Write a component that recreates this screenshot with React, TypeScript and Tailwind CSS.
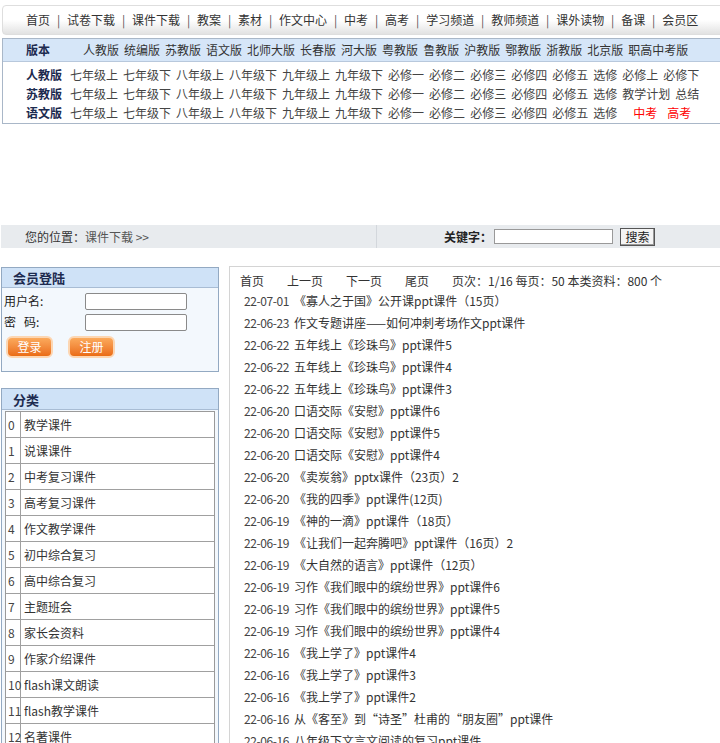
import React from 'react';

const NAV = ['首页', '试卷下载', '课件下载', '教案', '素材', '作文中心', '中考', '高考', '学习频道', '教师频道', '课外读物', '备课', '会员区'];

const VERSIONS = ['人教版', '统编版', '苏教版', '语文版', '北师大版', '长春版', '河大版', '粤教版', '鲁教版', '沪教版', '鄂教版', '浙教版', '北京版', '职高中考版'];

const GRADES = ['七年级上', '七年级下', '八年级上', '八年级下', '九年级上', '九年级下', '必修一', '必修二', '必修三', '必修四', '必修五', '选修'];

const ROWS = [
  { label: '人教版', extra: ['必修上', '必修下'], red: false },
  { label: '苏教版', extra: ['教学计划', '总结'], red: false },
  { label: '语文版', extra: ['中考', '高考'], red: true },
];

const CATEGORIES = ['教学课件', '说课课件', '中考复习课件', '高考复习课件', '作文教学课件', '初中综合复习', '高中综合复习', '主题班会', '家长会资料', '作家介绍课件', 'flash课文朗读', 'flash教学课件', '名著课件', '诗词鉴赏'];

const ITEMS: [string, string][] = [
  ['22-07-01', '《寡人之于国》公开课ppt课件（15页）'],
  ['22-06-23', '作文专题讲座——如何冲刺考场作文ppt课件'],
  ['22-06-22', '五年线上《珍珠鸟》ppt课件5'],
  ['22-06-22', '五年线上《珍珠鸟》ppt课件4'],
  ['22-06-22', '五年线上《珍珠鸟》ppt课件3'],
  ['22-06-20', '口语交际《安慰》ppt课件6'],
  ['22-06-20', '口语交际《安慰》ppt课件5'],
  ['22-06-20', '口语交际《安慰》ppt课件4'],
  ['22-06-20', '《卖炭翁》pptx课件（23页）2'],
  ['22-06-20', '《我的四季》ppt课件(12页)'],
  ['22-06-19', '《神的一滴》ppt课件（18页）'],
  ['22-06-19', '《让我们一起奔腾吧》ppt课件（16页）2'],
  ['22-06-19', '《大自然的语言》ppt课件（12页）'],
  ['22-06-19', '习作《我们眼中的缤纷世界》ppt课件6'],
  ['22-06-19', '习作《我们眼中的缤纷世界》ppt课件5'],
  ['22-06-19', '习作《我们眼中的缤纷世界》ppt课件4'],
  ['22-06-16', '《我上学了》ppt课件4'],
  ['22-06-16', '《我上学了》ppt课件3'],
  ['22-06-16', '《我上学了》ppt课件2'],
  ['22-06-16', '从《客至》到“诗圣”杜甫的“朋友圈”ppt课件'],
  ['22-06-16', '八年级下文言文阅读的复习ppt课件'],
  ['22-06-16', '《小石潭记》ppt课件'],
];

const OrangeButton: React.FC<{ label: string }> = ({ label }) => (
  <span className="inline-flex h-[22px] w-[47px] items-center justify-center rounded-[6px] border-2 border-[#fcd6b2] bg-gradient-to-b from-[#fbaa5c] to-[#ea6c12] text-[12px] text-white">
    {label}
  </span>
);

export default function App() {
  return (
    <div className="h-[743px] w-[720px] overflow-hidden bg-white font-['Noto_Sans_CJK_SC',sans-serif] text-[12px] text-[#333]">
      <div className="w-[960px] pl-[2px] pt-[5px]">
        {/* top nav */}
        <div className="flex h-[30px] items-center rounded-[4px] border border-[#dedede] bg-gradient-to-b from-white via-white to-[#e2e2e2] pl-[23px] leading-none">
          {NAV.map((n, i) => (
            <React.Fragment key={n}>
              {i > 0 && <span className="w-[17px] text-center text-[#555]">|</span>}
              <span>{n}</span>
            </React.Fragment>
          ))}
        </div>

        {/* version table */}
        <div className="mt-[3px] border border-[#a9b7c8] leading-none">
          <div className="flex h-[23px] items-center border-b border-[#b8c8dc] bg-[#d6e6f8] pl-[23px]">
            <span className="w-[57px] font-bold text-[#1d2b50]">版本</span>
            <div className="flex gap-[5px] text-[#333]">
              {VERSIONS.map((v) => (
                <span key={v}>{v}</span>
              ))}
            </div>
          </div>
          <div className="pb-[1px] pt-[3px]">
            {ROWS.map((r) => (
              <div key={r.label} className="flex h-[19px] items-center pl-[23px]">
                <span className="w-[44px] font-bold text-[#1d2b50]">{r.label}</span>
                <div className="flex gap-[5px] text-[#444]">
                  {GRADES.map((g) => (
                    <span key={g}>{g}</span>
                  ))}
                  {r.red ? (
                    <span className="ml-[11px] flex gap-[10px] text-[#f00]">
                      {r.extra.map((e) => (
                        <span key={e}>{e}</span>
                      ))}
                    </span>
                  ) : (
                    r.extra.map((e) => <span key={e}>{e}</span>)
                  )}
                </div>
              </div>
            ))}
          </div>
        </div>

        {/* location bar */}
        <div className="ml-[-1px] mt-[101px] flex h-[23px] items-center bg-[#e8ebee] leading-none">
          <div className="flex h-full w-[376px] items-center border-r border-[#d3d7dc] pl-[24px]">
            <span className="text-[#333]">您的位置：</span>
            <span className="text-[#555]">课件下载 &gt;&gt;</span>
          </div>
          <div className="flex items-center pl-[67px]">
            <span className="font-bold text-[#222]">关键字：</span>
            <input className="ml-[2px] h-[15px] w-[119px] border border-[#999] bg-white" />
            <span className="ml-[7px] flex h-[18px] w-[35px] items-center justify-center border border-[#555] bg-[#f4f4f4] text-[#222] shadow-[inset_-1px_-1px_0_#999]">
              搜索
            </span>
          </div>
        </div>

        {/* main */}
        <div className="ml-[-1px] mt-[18px] flex gap-[10px] leading-none">
          {/* left column */}
          <div className="w-[218px] shrink-0">
            <div className="mt-[1px] border border-[#93a9c2] bg-[#f3f8fd]">
              <div className="flex h-[20px] items-center border-b border-[#a8bcd4] bg-[#cfe2f7] pl-[11px] text-[13px] font-bold text-[#1d2b50]">
                会员登陆
              </div>
              <div className="h-[83px] pt-[4px]">
                <div className="flex h-[18px] items-center pl-[2px]">
                  <span className="w-[81px] text-[#222]">用户名:</span>
                  <input className="h-[17px] w-[102px] rounded-[2px] border border-[#8a8a8a] bg-white" />
                </div>
                <div className="mt-[3px] flex h-[18px] items-center pl-[2px]">
                  <span className="w-[81px] text-[#222]">密&nbsp;&nbsp;&nbsp;码:</span>
                  <input className="h-[17px] w-[102px] rounded-[2px] border border-[#8a8a8a] bg-white" />
                </div>
                <div className="mt-[5px] flex gap-[15px] pl-[4px]">
                  <OrangeButton label="登录" />
                  <OrangeButton label="注册" />
                </div>
              </div>
            </div>

            <div className="mt-[16px] border border-[#93a9c2] bg-[#f3f8fd]">
              <div className="flex h-[21px] items-center border-b border-[#a8bcd4] bg-[#cfe2f7] pl-[11px] text-[13px] font-bold text-[#1d2b50]">
                分类
              </div>
              <div className="mx-[3px] mt-[1px] border border-[#9a9a9a] bg-white">
                {CATEGORIES.map((c, i) => (
                  <div key={c} className="flex h-[26px] border-b border-[#a0a0a0] last:border-b-0">
                    <span className="flex w-[15px] items-center border-r border-[#a0a0a0] pl-[2px] text-[#444]">{i}</span>
                    <span className="flex items-center pl-[3px] text-[#333]">{c}</span>
                  </div>
                ))}
              </div>
            </div>
          </div>

          {/* right list */}
          <div className="flex-1 border-l border-t border-[#d4d4d4] pl-[10px] pt-[6px] text-[#333]">
            <div className="flex h-[16px] items-center gap-[23px]">
              <span>首页</span>
              <span>上一页</span>
              <span>下一页</span>
              <span>尾页</span>
              <span>页次：1/16 每页：50 本类资料：800 个</span>
            </div>
            <div className="mt-[1px] pl-[4px]">
              {ITEMS.map(([d, t], i) => (
                <div key={i} className="flex h-[22px] items-center">
                  <span className="w-[50px] tracking-[-0.4px] text-[#444]">{d}</span>
                  <span>{t}</span>
                </div>
              ))}
            </div>
          </div>
        </div>
      </div>
    </div>
  );
}
